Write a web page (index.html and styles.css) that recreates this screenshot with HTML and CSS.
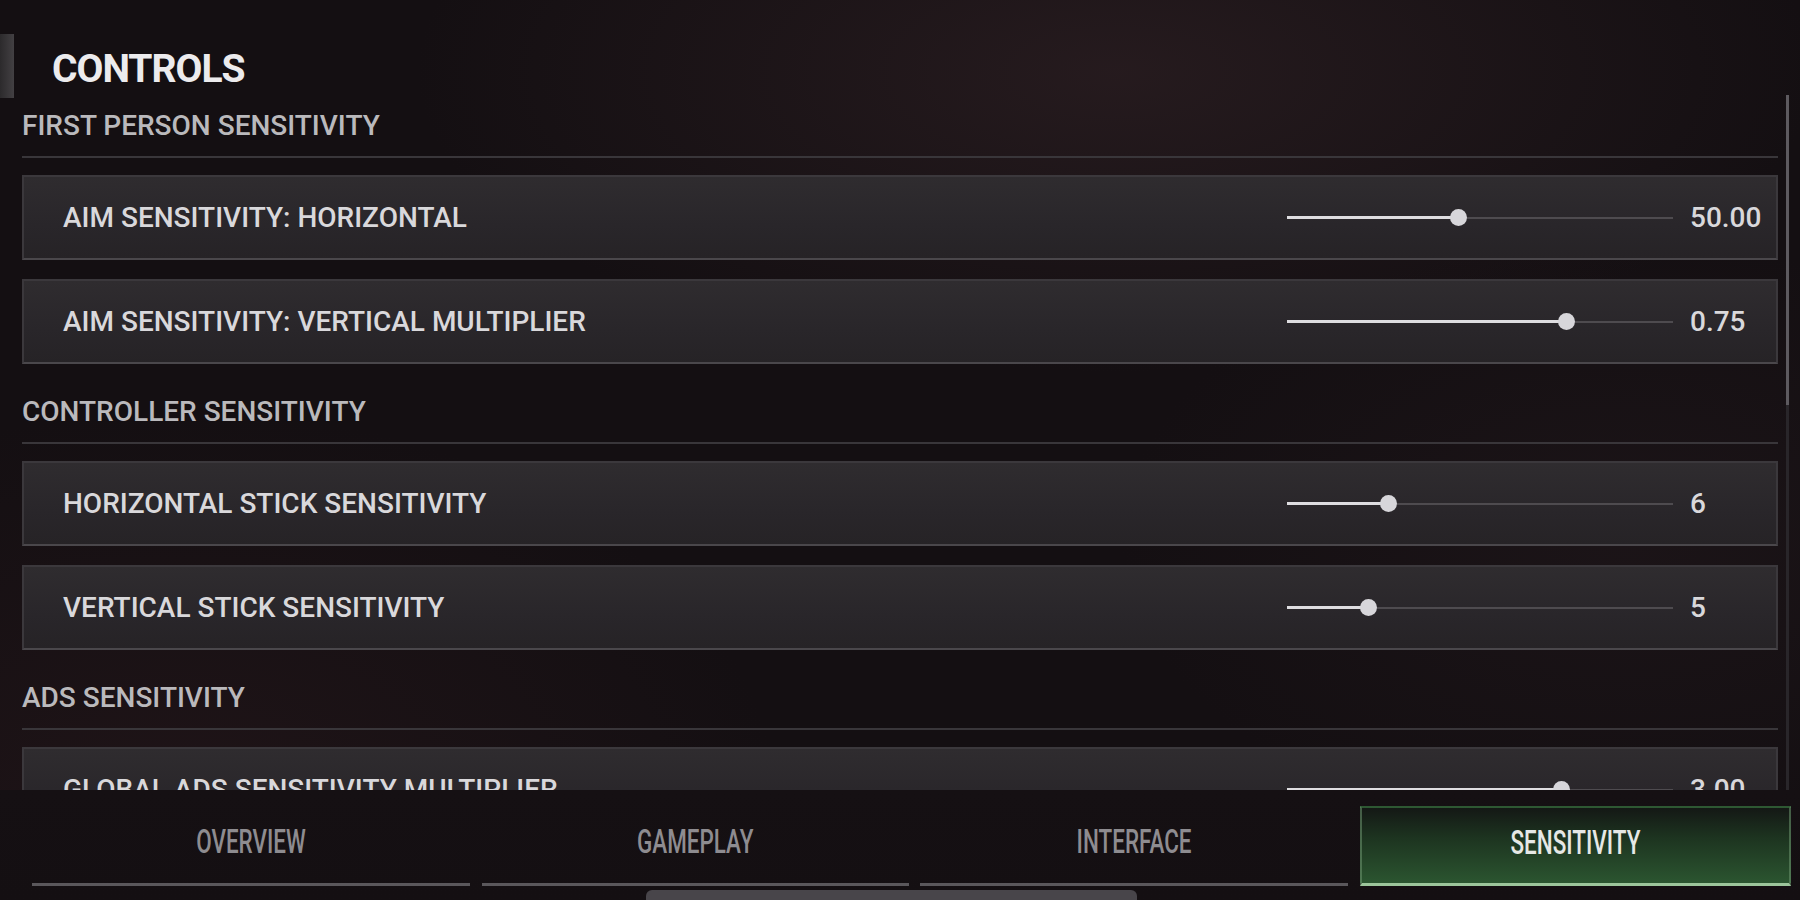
FILE: index.html
```html
<!DOCTYPE html>
<html lang="en">
<head>
<meta charset="utf-8">
<title>Controls</title>
<link rel="stylesheet" href="styles.css">
</head>
<body>
<div class="screen">
  <div class="edge-tab"></div>
  <main class="content">
    <h1 class="title">CONTROLS</h1>

    <section class="group">
      <h2 class="group-title">FIRST PERSON SENSITIVITY</h2>
      <div class="rows">
        <div class="row">
          <span class="label">AIM SENSITIVITY: HORIZONTAL</span>
          <div class="slider"><div class="fill" style="width:44.3%"></div><div class="knob" style="left:44.3%"></div></div>
          <span class="value">50.00</span>
        </div>
        <div class="row">
          <span class="label">AIM SENSITIVITY: VERTICAL MULTIPLIER</span>
          <div class="slider"><div class="fill" style="width:72.2%"></div><div class="knob" style="left:72.2%"></div></div>
          <span class="value">0.75</span>
        </div>
      </div>
    </section>

    <section class="group">
      <h2 class="group-title">CONTROLLER SENSITIVITY</h2>
      <div class="rows">
        <div class="row">
          <span class="label">HORIZONTAL STICK SENSITIVITY</span>
          <div class="slider"><div class="fill" style="width:26.2%"></div><div class="knob" style="left:26.2%"></div></div>
          <span class="value">6</span>
        </div>
        <div class="row">
          <span class="label">VERTICAL STICK SENSITIVITY</span>
          <div class="slider"><div class="fill" style="width:21%"></div><div class="knob" style="left:21%"></div></div>
          <span class="value">5</span>
        </div>
      </div>
    </section>

    <section class="group">
      <h2 class="group-title">ADS SENSITIVITY</h2>
      <div class="rows">
        <div class="row">
          <span class="label">GLOBAL ADS SENSITIVITY MULTIPLIER</span>
          <div class="slider"><div class="fill" style="width:71%"></div><div class="knob" style="left:71%"></div></div>
          <span class="value">3.00</span>
        </div>
      </div>
    </section>
  </main>

  <div class="scrollbar"><div class="thumb"></div></div>

  <nav class="tabbar">
    <div class="tabs">
      <div class="tab"><span class="tab-text">OVERVIEW</span></div>
      <div class="tab"><span class="tab-text">GAMEPLAY</span></div>
      <div class="tab"><span class="tab-text">INTERFACE</span></div>
      <div class="tab active"><span class="tab-text">SENSITIVITY</span></div>
    </div>
    <div class="hscroll"></div>
  </nav>
</div>
</body>
</html>
```
FILE: styles.css
```css
* { box-sizing: border-box; }

html, body {
  margin: 0;
  padding: 0;
  width: 1800px;
  height: 900px;
  overflow: hidden;
  background: #130f12;
  font-family: Roboto, "Liberation Sans", Arial, sans-serif;
}

.screen {
  position: relative;
  width: 1800px;
  height: 900px;
  display: flex;
  flex-direction: column;
  background:
    radial-gradient(ellipse 700px 300px at 62% 8%, rgba(52, 36, 40, 0.55) 0%, rgba(0,0,0,0) 100%),
    radial-gradient(ellipse 600px 400px at 10% 90%, rgba(44, 26, 30, 0.45) 0%, rgba(0,0,0,0) 100%),
    radial-gradient(ellipse 500px 300px at 90% 60%, rgba(36, 26, 30, 0.45) 0%, rgba(0,0,0,0) 100%),
    #140f12;
}

.edge-tab {
  position: absolute;
  left: 0;
  top: 34px;
  width: 14px;
  height: 64px;
  background: linear-gradient(90deg, #2c2a2c 0%, #434043 100%);
}

.content {
  height: 790px;
  flex: none;
  overflow: hidden;
  padding: 49px 22px 0 22px;
}

.title {
  margin: 0 0 22px 30px;
  font-size: 39px;
  line-height: 40px;
  font-weight: 700;
  letter-spacing: -1px;
  color: #ecebed;
}

.group {
  margin-bottom: 33px;
}

.group-title {
  margin: 0 0 17px 0;
  padding-bottom: 16px;
  border-bottom: 2px solid #39363a;
  font-size: 28px;
  line-height: 29px;
  font-weight: 500;
  letter-spacing: 0;
  color: #bab9bc;
}

.rows {
  display: flex;
  flex-direction: column;
  gap: 19px;
}

.row {
  height: 85px;
  display: flex;
  align-items: center;
  padding-left: 39px;
  border: 2px solid #3b383c;
  border-bottom-color: #4a474b;
  background: linear-gradient(180deg, #2f2c2f 0%, #29262a 60%, #262326 100%);
}

.label {
  flex: 1;
  font-size: 28px;
  line-height: 29px;
  font-weight: 500;
  letter-spacing: 0;
  color: #d9d8db;
}

.slider {
  position: relative;
  width: 386px;
  height: 18px;
  flex: none;
}

.slider::before {
  content: "";
  position: absolute;
  left: 0;
  right: 0;
  top: 8px;
  height: 2px;
  background: #4e4b4f;
}

.fill {
  position: absolute;
  left: 0;
  top: 7px;
  height: 3px;
  background: #dedde0;
}

.knob {
  position: absolute;
  top: 0;
  width: 17px;
  height: 17px;
  margin-left: -8px;
  border-radius: 50%;
  background: #d7d6da;
}

.value {
  flex: none;
  width: 86px;
  margin-left: 17px;
  font-size: 28px;
  line-height: 29px;
  font-weight: 500;
  color: #d9d8db;
}

.scrollbar {
  position: absolute;
  left: 1786px;
  top: 95px;
  width: 3px;
  height: 695px;
  background: #29262a;
}

.thumb {
  width: 3px;
  height: 310px;
  background: #5d5a5f;
}

.tabbar {
  flex: 1;
  display: flex;
  flex-direction: column;
  padding-top: 16px;
  background: linear-gradient(180deg, #151013 0%, #140f12 100%);
}

.tabs {
  display: grid;
  grid-template-columns: 438px 427px 428px 431px;
  column-gap: 11.5px;
  padding-left: 32px;
}

.tab {
  height: 80px;
  display: flex;
  align-items: center;
  justify-content: center;
  padding-bottom: 8px;
  border-bottom: 3px solid #5a575b;
}

.tab-text {
  display: inline-block;
  font-size: 34px;
  line-height: 34px;
  font-weight: 500;
  color: #8e8c90;
  transform: scaleX(0.66);
}

.tab.active {
  border: 2px solid rgba(108, 148, 110, 0.55);
  border-top-color: rgba(108, 148, 110, 0.05);
  border-bottom: 3px solid #9cc59b;
  background: linear-gradient(180deg, #141815 0%, #1d3420 40%, #2b5530 100%);
}

.tab.active .tab-text {
  color: #e6e8e6;
}

.hscroll {
  margin: 4px 0 0 646px;
  width: 491px;
  height: 10px;
  border-radius: 6px 6px 0 0;
  background: #48454a;
}
```
